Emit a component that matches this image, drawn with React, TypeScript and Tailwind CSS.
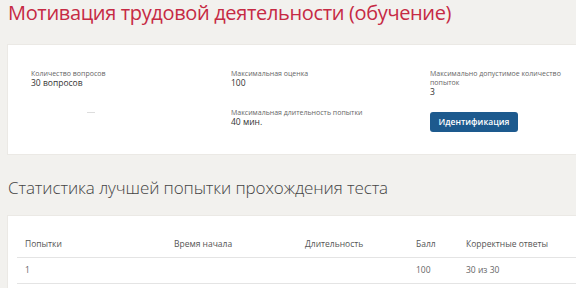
import React from 'react';

const TABLE_HEAD = ['Попытки', 'Время начала', 'Длительность', 'Балл', 'Корректные ответы'];
const TABLE_ROWS = [['1', '', '', '100', '30 из 30']];
const COL_WIDTHS = ['w-[149px]', 'w-[131px]', 'w-[111px]', 'w-[50px]', ''];

function InfoItem({ label, value }: { label: string; value: string }) {
  return (
    <div className="flex flex-col">
      <span className="text-[7px] leading-[9px] text-[#666]">{label}</span>
      <span className="text-[8.5px] leading-[10px] text-[#333]">{value}</span>
    </div>
  );
}

export default function App() {
  return (
    <div
      className="w-[576px] h-[288px] overflow-hidden bg-[#f2f1ee] pl-[7px]"
      style={{ fontFamily: '"Open Sans", "Noto Sans", sans-serif' }}
    >
      {/* заголовок теста */}
      <h1 className="pt-[1px] pl-[1px] text-[20px] leading-[24px] tracking-[-0.35px] text-[#c62a44]">
        Мотивация трудовой деятельности (обучение)
      </h1>

      {/* параметры теста */}
      <div className="mt-[19px] bg-white w-[600px] pl-[23px] pt-[24px] pb-[22px] border border-[#ebe9e5]">
        <div className="grid grid-cols-[200px_199px_150px] gap-y-[10px]">
          <InfoItem label="Количество вопросов" value="30 вопросов" />
          <InfoItem label="Максимальная оценка" value="100" />
          <div className="flex flex-col w-[145px]">
            <span className="text-[7px] leading-[9px] text-[#666]">
              Максимально допустимое количество попыток
            </span>
            <span className="text-[8.5px] leading-[10px] text-[#333]">3</span>
          </div>

          <div>
            <div className="ml-[56px] mt-[5px] w-[8px] h-px bg-[#ddd]" />
          </div>
          <div className="pt-[1px]">
            <InfoItem label="Максимальная длительность попытки" value="40 мин." />
          </div>
          <div>
            <button className="w-[88px] h-[20px] rounded-[3px] bg-[#1d5a8e] text-white text-[8.5px] font-semibold">
              Идентификация
            </button>
          </div>
        </div>
      </div>

      {/* статистика */}
      <h2 className="mt-[21px] pl-[1px] text-[17px] leading-[24px] tracking-[-0.1px] font-light text-[#444]">
        Статистика лучшей попытки прохождения теста
      </h2>

      <div className="mt-[15px] bg-white w-[600px] pl-[9px] pt-[15px] pb-[10px] border border-[#ebe9e5]">
        <table className="w-[560px] border-collapse">
          <thead>
            <tr className="border-b border-[#e4e4e4]">
              {TABLE_HEAD.map((h, i) => (
                <th
                  key={h}
                  className={`${COL_WIDTHS[i]} h-[26px] pl-[8px] text-left font-normal text-[8.5px] text-[#555]`}
                >
                  {h}
                </th>
              ))}
            </tr>
          </thead>
          <tbody>
            {TABLE_ROWS.map((row, r) => (
              <tr key={r} className="border-b border-[#e4e4e4]">
                {row.map((cell, i) => (
                  <td key={i} className="h-[26px] pl-[8px] text-[8.5px] text-[#666]">
                    {cell}
                  </td>
                ))}
              </tr>
            ))}
          </tbody>
        </table>
      </div>
    </div>
  );
}
